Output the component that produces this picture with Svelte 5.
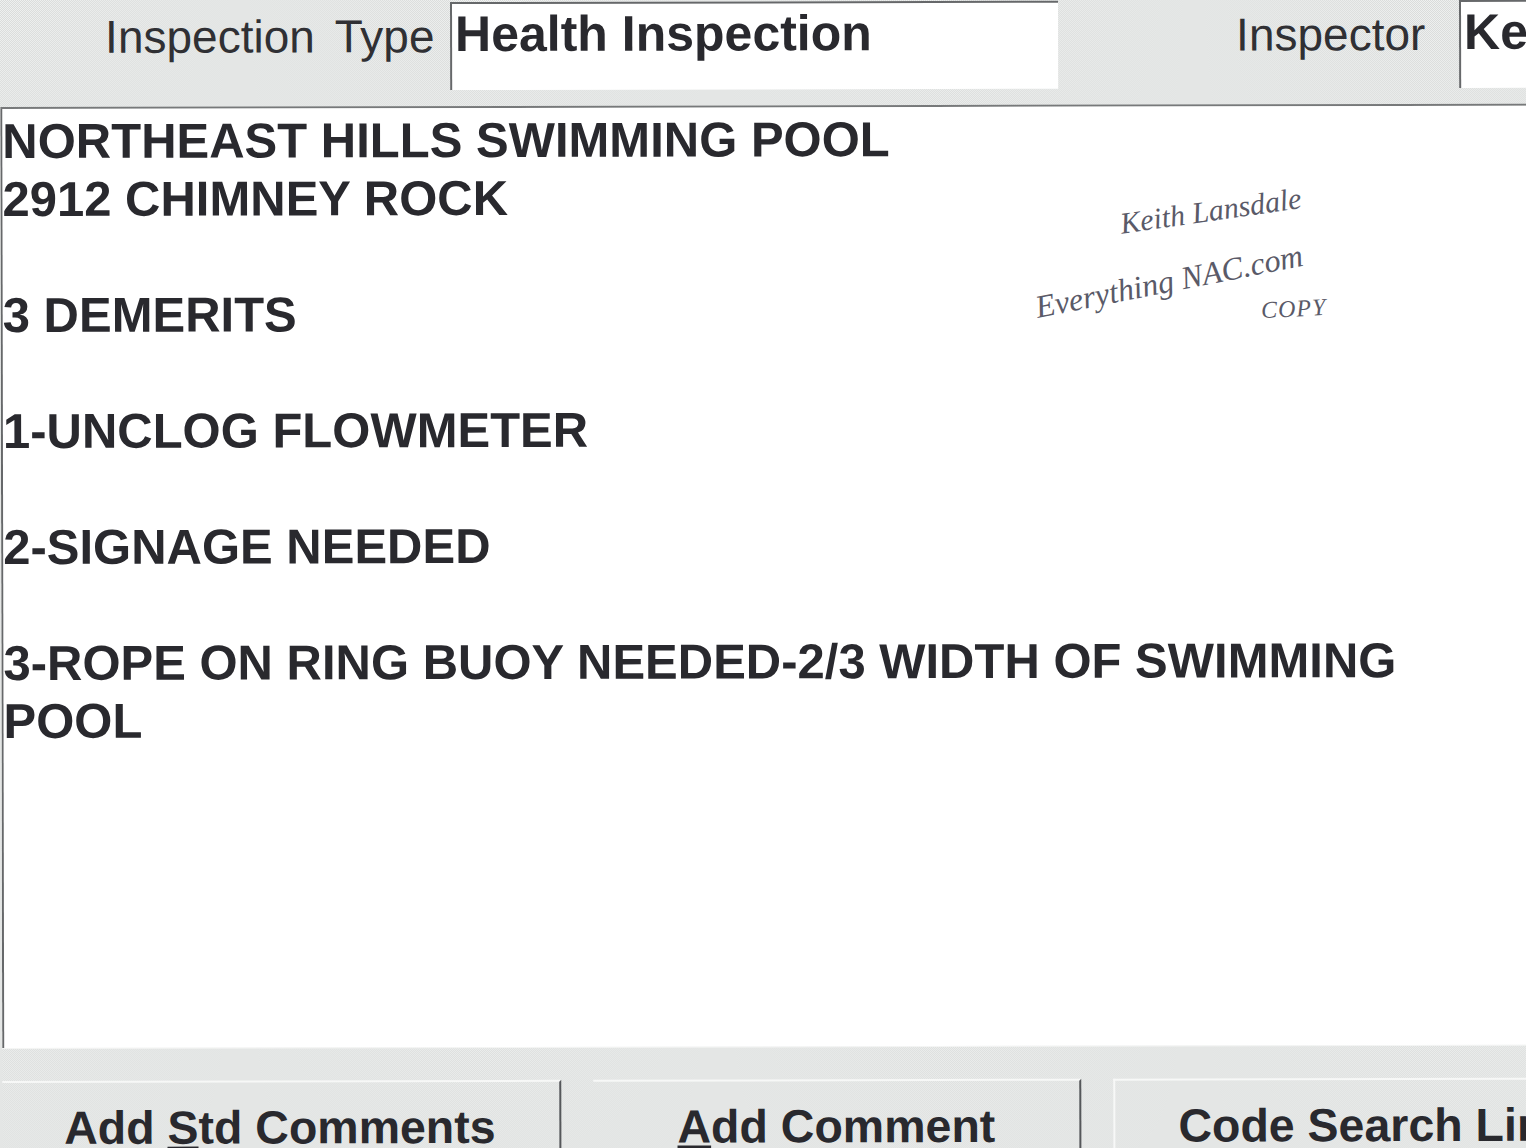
<script>
	const lines = [
		'NORTHEAST HILLS SWIMMING POOL',
		'2912 CHIMNEY ROCK',
		'',
		'3 DEMERITS',
		'',
		'1-UNCLOG FLOWMETER',
		'',
		'2-SIGNAGE NEEDED',
		'',
		'3-ROPE ON RING BUOY NEEDED-2/3 WIDTH OF SWIMMING POOL'
	];
</script>

<div class="page">
	<header class="top">
		<div class="fields">
			<span class="label type-label">Inspection Type</span>
			<div class="field type-field">Health Inspection</div>
			<span class="label inspector-label">Inspector</span>
			<div class="field inspector-field">Keith Lansdale</div>
		</div>
	</header>

	<main class="comments">
		{#each lines as line}
			<div class="line">{line || '\u00a0'}</div>
		{/each}

		<div class="note">
			<span class="hand name">Keith Lansdale</span>
			<span class="hand site">Everything NAC.com</span>
			<span class="hand copy">COPY</span>
		</div>
	</main>

	<footer class="actions">
		<div class="btn first"><span>Add <u>S</u>td Comments</span></div>
		<div class="btn second"><span><u>A</u>dd Comment</span></div>
		<div class="btn third"><span>Code Search Link</span></div>
	</footer>
</div>

<style>
	:global(body) {
		overflow: hidden;
		background: #e4e6e5;
	}

	/* scanned page: slightly tilted, grey areas are a fine halftone */
	.page {
		--halftone: repeating-conic-gradient(#d9dbda 0 25%, #eff1f0 0 50%) 0 0 / 2px 2px;
		width: 1540px;
		height: 1160px;
		display: flex;
		flex-direction: column;
		overflow: hidden;
		background: var(--halftone);
		color: #29292e;
		font-family: 'Liberation Sans', Arial, sans-serif;
		transform: rotate(-0.12deg);
		transform-origin: 0 0;
	}

	.top {
		height: 107px;
		flex: none;
		border-bottom: 2px solid #77797a;
		background: var(--halftone);
		overflow: hidden;
	}

	.fields {
		display: flex;
		height: 88px;
		padding-top: 3px;
		white-space: nowrap;
	}

	.label {
		flex: none;
		font-size: 46px;
		line-height: 68px;
		color: #303034;
	}

	.type-label {
		margin-left: 105px;
		width: 345px;
		word-spacing: 8px;
	}

	.inspector-label {
		margin-left: 178px;
		width: 223px;
	}

	.field {
		flex: none;
		box-sizing: border-box;
		background: #fff;
		border-left: 2px solid #66686a;
		border-top: 2px solid #66686a;
		padding-left: 3px;
		font-size: 50px;
		font-weight: 700;
		line-height: 60px;
		overflow: hidden;
	}

	.type-field {
		width: 608px;
	}

	.inspector-field {
		width: 200px;
	}

	.comments {
		position: relative;
		flex: none;
		height: 939px;
		box-sizing: border-box;
		padding: 3px 100px 0 0;
		background: #fff;
		border-left: 2px solid #66686a;
		font-size: 49px;
		font-weight: 700;
		line-height: 58px;
	}

	.note {
		position: absolute;
		left: 0;
		top: 0;
		font-family: 'Liberation Serif', serif;
		font-style: italic;
		font-weight: 400;
		color: #5a5a68;
		line-height: 1;
		white-space: nowrap;
	}

	.hand {
		position: absolute;
		transform-origin: left bottom;
	}

	.name {
		left: 1120px;
		top: 102px;
		font-size: 30px;
		transform: rotate(-8deg);
	}

	.site {
		left: 1036px;
		top: 184px;
		font-size: 32px;
		transform: rotate(-11deg);
	}

	.copy {
		left: 1259px;
		top: 192px;
		font-size: 24px;
		letter-spacing: 1px;
		transform: rotate(-3deg);
	}

	.actions {
		flex: 1;
		display: flex;
		gap: 32px;
		margin-left: -2px;
		padding-top: 32px;
		background: var(--halftone);
		border-top: 1px solid #f4f5f4;
	}

	.btn {
		flex: none;
		box-sizing: border-box;
		height: 80px;
		border-top: 2px solid #f7f8f7;
		font-size: 46.5px;
		font-weight: 700;
		line-height: 90px;
		text-align: center;
		white-space: nowrap;
		overflow: hidden;
	}

	.first,
	.second {
		border-right: 2px solid #55575a;
	}

	.first {
		width: 561px;
	}

	.second {
		width: 488px;
	}

	.third {
		width: 500px;
		padding-left: 63px;
		text-align: left;
		border-left: 2px solid #f7f8f7;
	}

	u {
		text-underline-offset: 3px;
	}
</style>
